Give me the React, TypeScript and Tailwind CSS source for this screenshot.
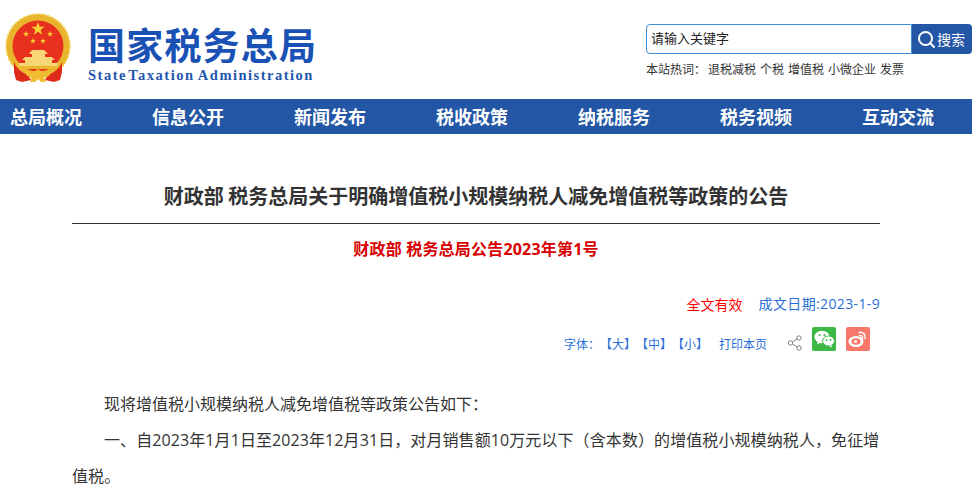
import React from 'react';

const cjk = "font-['Microsoft_YaHei','Noto_Sans_CJK_SC','Noto_Sans',sans-serif]";
const digits = "font-['Open_Sans','Noto_Sans_CJK_SC',sans-serif]";

const navItems = ['总局概况', '信息公开', '新闻发布', '税收政策', '纳税服务', '税务视频', '互动交流'];
const hotWords = ['退税减税', '个税', '增值税', '小微企业', '发票'];
const sizes = ['大', '中', '小'];

const Star = ({ x, y, r }: { x: number; y: number; r: number }) => {
    const pts = Array.from({ length: 10 }, (_, i) => {
        const a = -Math.PI / 2 + (i * Math.PI) / 5;
        const d = i % 2 === 0 ? r : r * 0.4;
        return `${(x + d * Math.cos(a)).toFixed(2)},${(y + d * Math.sin(a)).toFixed(2)}`;
    }).join(' ');
    return <polygon points={pts} fill="#f8d12e" />;
};

const Emblem = () => (
    <svg width="66" height="70" viewBox="5 13 66 70" className="shrink-0">
        <circle cx="38" cy="46" r="32" fill="#e9b52f" />
        <circle cx="38" cy="46" r="32" fill="none" stroke="#f6d65e" strokeWidth="1.500" strokeDasharray="3 2" />
        <circle cx="38" cy="46" r="25.500" fill="#e8301e" />
        <Star x={38} y={29} r={7} />
        <Star x={26} y={34} r={3.2} />
        <Star x={50} y={34} r={3.2} />
        <Star x={33} y={41} r={3} />
        <Star x={43} y={41} r={3} />
        <path d="M32 50h12l4 4h-3v3h7l3 3h-3v3h6v3H19v-3h6v-3h-3l3-3h7v-3h-3z" fill="#f7d675" />
        <path d="M19 66h38v3H19z" fill="#eeb62c" />
        <path d="M14 62c2 6 8 11 14 13l3 5-9 2-6-2-2-8z" fill="#dd2a1a" />
        <path d="M62 62c-2 6-8 11-14 13l-3 5 9 2 6-2 2-8z" fill="#dd2a1a" />
        <path d="M24 70c3 1 6 2 9 2l5-3 5 3c3 0 6-1 9-2l-3 6-5 1 2 5h-5l-3-3-3 3h-5l2-5-5-1z" fill="#f0bd30" />
    </svg>
);

const SearchIcon = () => (
    <svg width="19" height="19" viewBox="0 0 19 19" fill="none" stroke="#fff" strokeWidth="2" strokeLinecap="round">
        <circle cx="8.500" cy="8.500" r="6.500" />
        <path d="M13.500 13.500l3.500 3.500" />
    </svg>
);

const ShareIcon = () => (
    <svg width="16" height="16" viewBox="0 0 16 16" fill="none" stroke="#808080" strokeWidth="1">
        <circle cx="3.500" cy="8" r="2.200" />
        <circle cx="12" cy="3" r="2.200" />
        <circle cx="12" cy="13" r="2.200" />
        <path d="M5.500 7l4.600-3M5.500 9l4.600 3" />
    </svg>
);

const WeChatIcon = () => (
    <div className="w-6 h-6 rounded-[2px] bg-[#3cb944] flex items-center justify-center">
        <svg width="21" height="18" viewBox="0 0 21 18">
            <ellipse cx="8" cy="7" rx="7.500" ry="6.200" fill="#fff" />
            <path d="M4 11l-1 3.500 4-2z" fill="#fff" />
            <ellipse cx="14.500" cy="11" rx="6" ry="5" fill="#fff" stroke="#3cb944" strokeWidth="1" />
            <path d="M17 15l1.500 2.500-3.500-1.500z" fill="#fff" />
            <circle cx="5.500" cy="5" r="1" fill="#3cb944" />
            <circle cx="10.500" cy="5" r="1" fill="#3cb944" />
            <circle cx="12.500" cy="10" r=".9" fill="#3cb944" />
            <circle cx="16.500" cy="10" r=".9" fill="#3cb944" />
        </svg>
    </div>
);

const WeiboIcon = () => (
    <div className="w-6 h-6 rounded-[2px] bg-[#f8776a] flex items-center justify-center">
        <svg width="20" height="18" viewBox="0 0 20 18">
            <ellipse cx="8" cy="11.500" rx="7.500" ry="5.500" fill="#fff" />
            <ellipse cx="8" cy="11.500" rx="4.500" ry="3.200" fill="#f8776a" />
            <circle cx="7.500" cy="11.500" r="1.600" fill="#fff" />
            <path d="M11 2.500c4-1 7 2 6 6M11.500 5.500c2-.5 3.500 1 3 3" fill="none" stroke="#fff" strokeWidth="1.500" strokeLinecap="round" />
        </svg>
    </div>
);

const App: React.FC = () => {
    return (
        <div className={`w-[972px] h-[490px] overflow-hidden bg-white ${cjk}`}>
            <header className="h-[99px] flex justify-between pl-[5px]">
                <div className="flex pt-[13px]">
                    <Emblem />
                    <div className="ml-[17px] pt-[11px]">
                        <div className="text-[37px] leading-[41px] font-bold tracking-[1.2px] text-[#1a51b5] whitespace-nowrap">国家税务总局</div>
                        <div className="text-[14.5px] leading-[18px] mt-[1px] font-bold tracking-[1.5px] [word-spacing:-1px] text-[#2256ae] whitespace-nowrap font-['Liberation_Serif',serif]">
                            <span className="[word-spacing:-3.5px]">State Taxation</span> Administration
                        </div>
                    </div>
                </div>
                <div className="w-[326px] pt-[24px]">
                    <div className="flex h-[30px]">
                        <div className="flex-1 border border-[#3b8fd6] rounded-l-[4px] pl-[4px] text-[13px] leading-[25px] text-[#222]">请输入关键字</div>
                        <button className="w-[60px] bg-[#2356a4] rounded-r-[4px] pr-[2px] flex items-center justify-center gap-[1px] text-white text-[14px]">
                            <SearchIcon />
                            <span>搜索</span>
                        </button>
                    </div>
                    <div className="flex text-[12px] leading-[16px] mt-[7px] text-[#333] whitespace-nowrap">
                        <span className="mr-[2px]">本站热词：</span>
                        <div className="flex gap-[4px]">
                            {hotWords.map(word => <span key={word}>{word}</span>)}
                        </div>
                    </div>
                </div>
            </header>

            <nav className="h-[35px] bg-[#2356a4] flex pl-[10px] items-center">
                {navItems.map(item => (
                    <span key={item} className="w-[142px] shrink-0 text-[18px] font-bold text-white leading-[35px] whitespace-nowrap">{item}</span>
                ))}
            </nav>

            <main className="ml-[72px] w-[808px]">
                <h1 className="pt-[48px] text-[20px] leading-[28px] font-bold text-[#333] text-center whitespace-nowrap">财政部 税务总局关于明确增值税小规模纳税人减免增值税等政策的公告</h1>
                <div className="mt-[13px] border-t border-[#333]" />
                <div className={`mt-[13px] text-[16px] leading-[24px] font-bold tracking-[0.2px] text-[#d80000] text-center ${digits}`}>财政部 税务总局公告2023年第1号</div>

                <div className="mt-[33px] flex justify-end gap-[16px] text-[14px] leading-[20px]">
                    <span className="text-[#f00]">全文有效</span>
                    <span className={`text-[#2a6fd6] tracking-[0.36px] ${digits}`}>成文日期:2023-1-9</span>
                </div>

                <div className="mt-[13px] h-[24px] pr-[10px] flex justify-end items-center text-[12px] text-[#2a6fd6] whitespace-nowrap">
                    <span className="mt-[10px]">字体：</span>
                    {sizes.map(size => <span key={size} className="mt-[10px] w-[36px] text-center">【{size}】</span>)}
                    <span className="mt-[10px] ml-[11px]">打印本页</span>
                    <span className="mt-[8px] ml-[20px]"><ShareIcon /></span>
                    <span className="ml-[9px]"><WeChatIcon /></span>
                    <span className="ml-[10px]"><WeiboIcon /></span>
                </div>

                <div className="mt-[34px] text-[16px] leading-[36.5px] text-[#333]">
                    <p className="indent-[32px]">现将增值税小规模纳税人减免增值税等政策公告如下：</p>
                    <p className={`indent-[32px] tracking-[0.09px] ${digits}`}>一、自2023年1月1日至2023年12月31日，对月销售额10万元以下（含本数）的增值税小规模纳税人，免征增值税。</p>
                </div>
            </main>
        </div>
    );
};

export default App;
